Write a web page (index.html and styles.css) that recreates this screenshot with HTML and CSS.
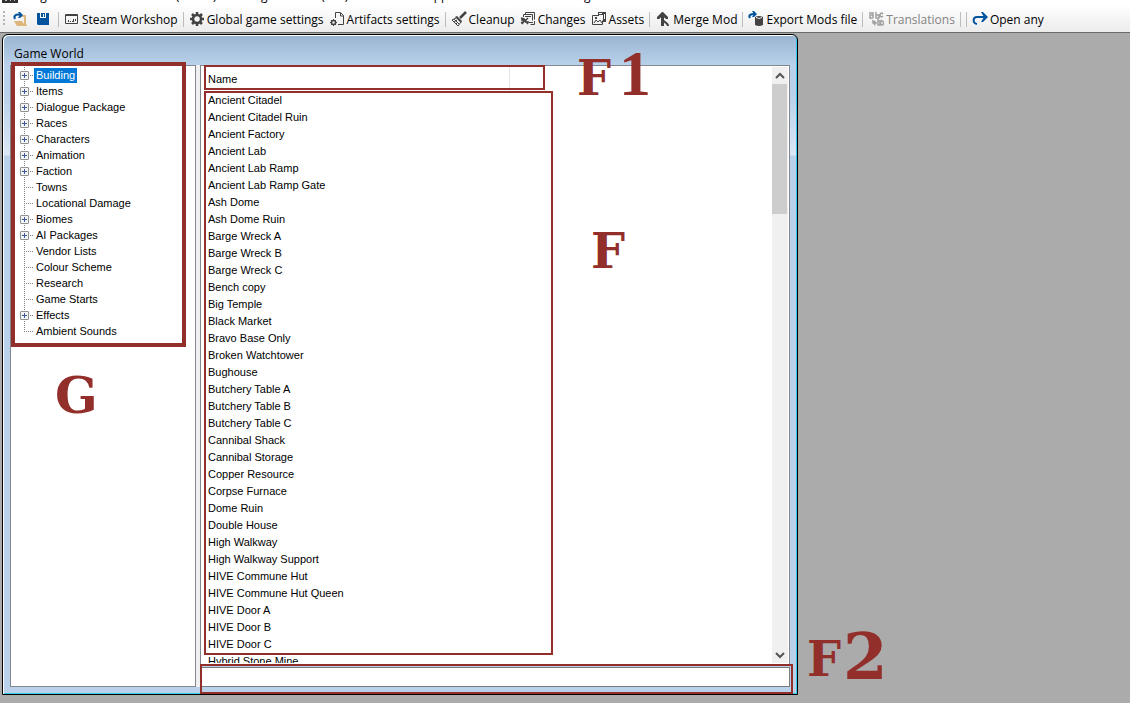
FILE: index.html
```html
<!DOCTYPE html>
<html lang="en">
<head>
<meta charset="utf-8">
<title>Forgotten Construction Set</title>
<link rel="stylesheet" href="styles.css">
</head>
<body>
<header class="caption">
  <svg class="caption-icon" viewBox="0 0 16 16"><path fill="#333" d="M0 0h16v16H0z"/><path fill="#bbb" d="M3 12h2v2H3zM8 11h1v3H8zM12 12h1v2h-1z"/></svg>
  <span>Forgotten Construction Set (1.0.55) - C:\Program Files (x86)\Steam\steamapps\common\Kenshi\data\gamedata.base - 1.0\</span>
</header>
<nav class="toolbar">
  <span class="grip"></span>
  <button class="tool icon-only" aria-label="Open"><svg viewBox="0 0 16 16"><path fill="#dcb67a" d="M9 4h5v9l1 2H5l-3-5h8l2 3V6H9z"/><path fill="none" stroke="#00539c" stroke-width="2" d="M3 8C1 4 5 3 8 4"/><path fill="#00539c" d="M6 1h2l3 3-3 3H6l2-3z"/></svg></button>
  <button class="tool icon-only" aria-label="Save"><svg viewBox="0 0 16 16"><path fill="#00539c" d="M2 2h3v5h6V2h3v12H3l-1-1zM6 2h4v4H9V3H8v3H6z"/></svg></button>
  <span class="sep"></span>
  <button class="tool"><svg viewBox="0 0 16 16"><path fill="none" stroke="#424242" d="M1.500 3.500h12v9h-12zM1 4.500h13"/><path fill="#424242" d="M4 9h1v2H4zM6 10h1v1H6zM8 10h1v1H8zM9 8h1v3H9zM11 8h1v2h-1z"/></svg>Steam Workshop</button>
  <span class="sep"></span>
  <button class="tool"><svg viewBox="0 0 16 16"><circle cx="8" cy="8" r="4" fill="none" stroke="#424242" stroke-width="2.500"/><path stroke="#424242" stroke-width="2.500" d="M8 1v3M8 12v3M1 8h3M12 8h3M3 3l2 2M11 11l2 2M13 3l-2 2M5 11l-2 2"/></svg>Global game settings</button>
  <button class="tool"><svg viewBox="0 0 16 16"><path fill="none" stroke="#424242" d="M6.500 7V1.500h5l3 3v9H9M11.500 2v3h3"/><circle cx="4.500" cy="11.500" r="2" fill="none" stroke="#424242" stroke-width="1.500"/><path stroke="#424242" d="M4.500 8v2M4.500 13v2M1 11.500h2M6 11.500h2M2 9l1 1M6 13l1 1M7 9l-1 1M3 13l-1 1"/></svg>Artifacts settings</button>
  <span class="sep"></span>
  <button class="tool"><svg viewBox="0 0 16 16"><path stroke="#424242" stroke-width="2.500" d="M15 1L9 7"/><path fill="#424242" d="M6 5l5 5-1 2-6-6z"/><path fill="none" stroke="#424242" d="M5 7L1 9l6 6 3-4M3 8l5 5M3 11l3-2M5 13l2-2"/></svg>Cleanup</button>
  <button class="tool"><svg viewBox="0 0 16 16"><path fill="none" stroke="#424242" d="M3.500 6V3.500h9v6M5.500 3V1.500h9v7M5 5.500h6M14.500 10v3.500h-4M9 11.500h4"/><path fill="none" stroke="#424242" stroke-width="1.500" d="M1 7l3 1 4 5M8 7l-3 3-4 2M1 9h3M5 11h4M2 13l2-3"/></svg>Changes</button>
  <button class="tool"><svg viewBox="0 0 16 16"><path fill="none" stroke="#424242" d="M8 4.500H1.500v9h10v-4M3 12l2-3 2 2 2-2 2 3"/><path fill="#424242" d="M7 1h8v10h-3V4H7zM4 6h2v2H4z"/><path stroke="#fff" d="M8 2.500h3M13.500 3v5"/></svg>Assets</button>
  <span class="sep"></span>
  <button class="tool"><svg viewBox="0 0 16 16"><path fill="none" stroke="#424242" stroke-width="3" d="M7.500 15V3"/><path fill="none" stroke="#424242" stroke-width="2" d="M13 15c0-3-3-3-5-6"/><path fill="#424242" d="M7 1h1l5 5v2H11L7.500 5 4 8H2V6z"/></svg>Merge Mod</button>
  <span class="sep"></span>
  <button class="tool"><svg viewBox="0 0 16 16"><path fill="none" stroke="#00539c" stroke-width="2" d="M2 7C0 4 3 3 6 3"/><path fill="#00539c" d="M4 0h2l3 3-3 3H4l2-3z"/><path fill="#424242" d="M7 6q4-2 8 0v8q-4 2-8 0z"/><path stroke="#eee" fill="none" d="M8 6.500q3 2 6 0"/></svg>Export Mods file</button>
  <span class="sep"></span>
  <button class="tool" disabled><svg viewBox="0 0 16 16" fill="none" stroke="#a0a0a0" stroke-width="1.500"><path d="M1 2h4v5M5 4H2v3h3M8 1v6h3V4H8M15 3c-2-2-3 0-3 1s1 3 3 1M5 9v3h3M6 10l2 2-2 2M10 8v6h2v-4h-2M14 9c-2 1-2 5 0 5s2-4 0-4h-3"/></svg>Translations</button>
  <span class="sep"></span><span class="sep"></span>
  <button class="tool"><svg viewBox="0 0 16 16"><path fill="none" stroke="#00539c" stroke-width="2" d="M5 13C0 12 1 6 5 6h8"/><path fill="#00539c" d="M9 1h2l5 5-5 5H9l3-5z"/></svg>Open any</button>
</nav>
<main class="desktop">
  <section class="window">
    <h1 class="window-title">Game World</h1>
    <div class="panes">
      <aside class="tree-pane">
        <ul class="tree">
          <li><button class="expand" aria-label="Expand"></button><span class="selected">Building</span></li>
          <li><button class="expand" aria-label="Expand"></button><span>Items</span></li>
          <li><button class="expand" aria-label="Expand"></button><span>Dialogue Package</span></li>
          <li><button class="expand" aria-label="Expand"></button><span>Races</span></li>
          <li><button class="expand" aria-label="Expand"></button><span>Characters</span></li>
          <li><button class="expand" aria-label="Expand"></button><span>Animation</span></li>
          <li><button class="expand" aria-label="Expand"></button><span>Faction</span></li>
          <li><span>Towns</span></li>
          <li><span>Locational Damage</span></li>
          <li><button class="expand" aria-label="Expand"></button><span>Biomes</span></li>
          <li><button class="expand" aria-label="Expand"></button><span>AI Packages</span></li>
          <li><span>Vendor Lists</span></li>
          <li><span>Colour Scheme</span></li>
          <li><span>Research</span></li>
          <li><span>Game Starts</span></li>
          <li><button class="expand" aria-label="Expand"></button><span>Effects</span></li>
          <li><span>Ambient Sounds</span></li>
        </ul>
        <div class="mark mark-tree"></div>
        <span class="letter letter-g">G</span>
      </aside>
      <div class="content">
        <div class="list-pane">
          <div class="list-view">
            <table class="list">
              <thead><tr><th>Name</th></tr></thead>
              <tbody>
                <tr><td>Ancient Citadel</td></tr>
                <tr><td>Ancient Citadel Ruin</td></tr>
                <tr><td>Ancient Factory</td></tr>
                <tr><td>Ancient Lab</td></tr>
                <tr><td>Ancient Lab Ramp</td></tr>
                <tr><td>Ancient Lab Ramp Gate</td></tr>
                <tr><td>Ash Dome</td></tr>
                <tr><td>Ash Dome Ruin</td></tr>
                <tr><td>Barge Wreck A</td></tr>
                <tr><td>Barge Wreck B</td></tr>
                <tr><td>Barge Wreck C</td></tr>
                <tr><td>Bench copy</td></tr>
                <tr><td>Big Temple</td></tr>
                <tr><td>Black Market</td></tr>
                <tr><td>Bravo Base Only</td></tr>
                <tr><td>Broken Watchtower</td></tr>
                <tr><td>Bughouse</td></tr>
                <tr><td>Butchery Table A</td></tr>
                <tr><td>Butchery Table B</td></tr>
                <tr><td>Butchery Table C</td></tr>
                <tr><td>Cannibal Shack</td></tr>
                <tr><td>Cannibal Storage</td></tr>
                <tr><td>Copper Resource</td></tr>
                <tr><td>Corpse Furnace</td></tr>
                <tr><td>Dome Ruin</td></tr>
                <tr><td>Double House</td></tr>
                <tr><td>High Walkway</td></tr>
                <tr><td>High Walkway Support</td></tr>
                <tr><td>HIVE Commune Hut</td></tr>
                <tr><td>HIVE Commune Hut Queen</td></tr>
                <tr><td>HIVE Door A</td></tr>
                <tr><td>HIVE Door B</td></tr>
                <tr><td>HIVE Door C</td></tr>
                <tr><td>Hybrid Stone Mine</td></tr>
              </tbody>
            </table>
          </div>
          <div class="scrollbar">
            <button class="arrow" aria-label="Scroll up"><svg viewBox="0 0 16 16"><path d="M4 10l4-4 4 4"/></svg></button>
            <div class="thumb"></div>
            <button class="arrow arrow-down" aria-label="Scroll down"><svg viewBox="0 0 16 16"><path d="M4 6l4 4 4-4"/></svg></button>
          </div>
          <div class="mark mark-header"></div>
          <div class="mark mark-rows"></div>
          <span class="letter letter-f1">F</span>
          <span class="letter letter-one">1</span>
          <span class="letter letter-f">F</span>
        </div>
        <input class="filter" type="text" aria-label="Filter">
        <div class="mark mark-filter"></div>
        <span class="letter letter-f2">F</span>
        <span class="letter letter-two">2</span>
      </div>
    </div>
  </section>
</main>
</body>
</html>
```

FILE: styles.css
```css
* { box-sizing: border-box; }

body {
  margin: 0;
  height: 100vh;
  display: flex;
  flex-direction: column;
  overflow: hidden;
  background: #fff;
  color: #000;
  font: 12px "Open Sans", "Noto Sans", sans-serif;
}

button {
  border: 0;
  padding: 0;
  background: none;
  color: inherit;
  font: inherit;
}

/* Caption strip, scrolled mostly out of view */
.caption {
  height: 7px;
  flex: none;
  display: flex;
  align-items: flex-end;
  gap: 4px;
  padding-left: 2px;
  overflow: hidden;
  white-space: nowrap;
  line-height: 16px;
}
.caption span { margin-bottom: 3px; }
.caption-icon { width: 16px; height: 16px; margin-bottom: 4px; flex: none; }

/* Toolbar */
.toolbar {
  flex: none;
  height: 25px;
  display: flex;
  align-items: center;
  padding: 0 0 1px 3px;
  background: linear-gradient(#fdfdfd, #ececec);
  white-space: nowrap;
}
.grip {
  width: 2px;
  height: 16px;
  margin-right: 4px;
  background: repeating-linear-gradient(#b4b4b4 0 2px, transparent 2px 4px);
}
.tool {
  display: flex;
  align-items: center;
  gap: 2px;
  height: 22px;
  padding: 0 2px 0 3px;
}
.tool svg { width: 16px; height: 16px; flex: none; }
.tool.icon-only { padding-right: 4px; }
.tool:disabled { color: #838383; }
.sep { width: 1px; height: 15px; margin: 0 2px 0 3px; background: #bdbdbd; }

/* Desktop area and child window */
.desktop {
  flex: 1;
  min-height: 0;
  display: grid;
  grid-template-columns: 796fr 332fr;
  padding: 1px 0 8px 2px;
  background: #ababab;
  border-top: 1px solid #696969;
}
.window {
  min-height: 0;
  display: flex;
  flex-direction: column;
  border: 1px solid #000;
  border-radius: 6px 6px 0 0;
  background: linear-gradient(#99b4d1, #b9d1ea 30px, #b9d1ea 60px, #dbe7f5 120px, #b9d1ea 121px);
  box-shadow: inset 1px 1px #fff, inset -1px -1px #35c9ee;
}
.window-title {
  margin: 0;
  padding: 11px 11px 3px;
  font-size: 12px;
  font-weight: 400;
  line-height: 16px;
}
.panes {
  flex: 1;
  min-height: 0;
  display: grid;
  grid-template-columns: 186px 1fr;
  gap: 4px;
  margin: 0 7px 7px;
  background: linear-gradient(#f0f0f0, #f0f0f0) 186px 0 / 4px 100% no-repeat;
  font: 11px "Liberation Sans", Arial, sans-serif;
}
.tree-pane, .list-pane { position: relative; background: #fff; border: 1px solid #828790; }

/* Tree */
.tree { list-style: none; margin: 0; padding: 1px 0 0 9px; }
.tree li {
  position: relative;
  display: flex;
  align-items: center;
  height: 16px;
  padding-left: 14px;
  line-height: 15px;
  background:
    repeating-linear-gradient(90deg, #808080 0 1px, transparent 1px 2px) 4px 8px / 9px 1px no-repeat,
    repeating-linear-gradient(#808080 0 1px, transparent 1px 2px) 4px 0 / 1px 16px no-repeat;
}
.tree li:last-child {
  background-size: 9px 1px, 1px 8px;
}
.tree span { padding: 0 2px; }
.tree .selected { background: #0078d7; color: #fff; }
.expand {
  position: absolute;
  left: 0;
  top: 4px;
  width: 9px;
  height: 9px;
  border: 1px solid #919191;
  border-radius: 1px;
  background:
    linear-gradient(#3c5a9c, #3c5a9c) 1px 3px / 5px 1px no-repeat,
    linear-gradient(#3c5a9c, #3c5a9c) 3px 1px / 1px 5px no-repeat,
    #f4f4f4;
}

/* List */
.content { position: relative; min-width: 0; min-height: 0; display: flex; flex-direction: column; gap: 2px; }
.list-pane { flex: 1; min-height: 0; display: flex; padding: 1px; }
.list-view { flex: 1; overflow: hidden; }
.list { border-collapse: collapse; width: 308px; }
.list th, .list td { padding: 0 6px; text-align: left; font-weight: 400; white-space: nowrap; }
.list th { height: 24px; border-right: 1px solid #e5e5e5; }
.list td { height: 17px; }
.scrollbar { width: 16px; display: flex; flex-direction: column; background: #f0f0f0; }
.arrow { height: 17px; }
.arrow svg { display: block; width: 16px; height: 16px; fill: none; stroke: #555; stroke-width: 2; }
.arrow-down { margin-top: auto; }
.thumb { height: 130px; margin-right: 1px; background: #cdcdcd; }
.filter { height: 20px; padding: 1px 4px; border: 1px solid #7a7a7a; background: #fff; font: inherit; }

/* Annotations laid over the window */
.mark { position: absolute; border: 2px solid #922f2a; pointer-events: none; }
.mark-tree { left: 0; right: 9px; top: -4px; height: 285px; border-width: 4px; }
.mark-header { left: 3px; top: -1px; width: 341px; height: 25px; }
.mark-rows { left: 3px; top: 25px; width: 349px; bottom: 9px; }
.mark-filter { left: 0; right: -3px; bottom: -7px; height: 30px; }
.letter {
  position: absolute;
  color: #922f2a;
  font: bold 48px/48px "DejaVu Serif", serif;
}
.letter-g { left: 44px; top: 306px; font-size: 50px; }
.letter-f1 { left: 376px; top: -12px; }
.letter-one { left: 418px; top: -24px; font: bold 64px/64px "Liberation Serif", serif; }
.letter-f { left: 390px; top: 161px; }
.letter-f2 { left: 607px; bottom: 4px; }
.letter-two { left: 643px; bottom: -2px; font-size: 64px; line-height: 64px; }
```
